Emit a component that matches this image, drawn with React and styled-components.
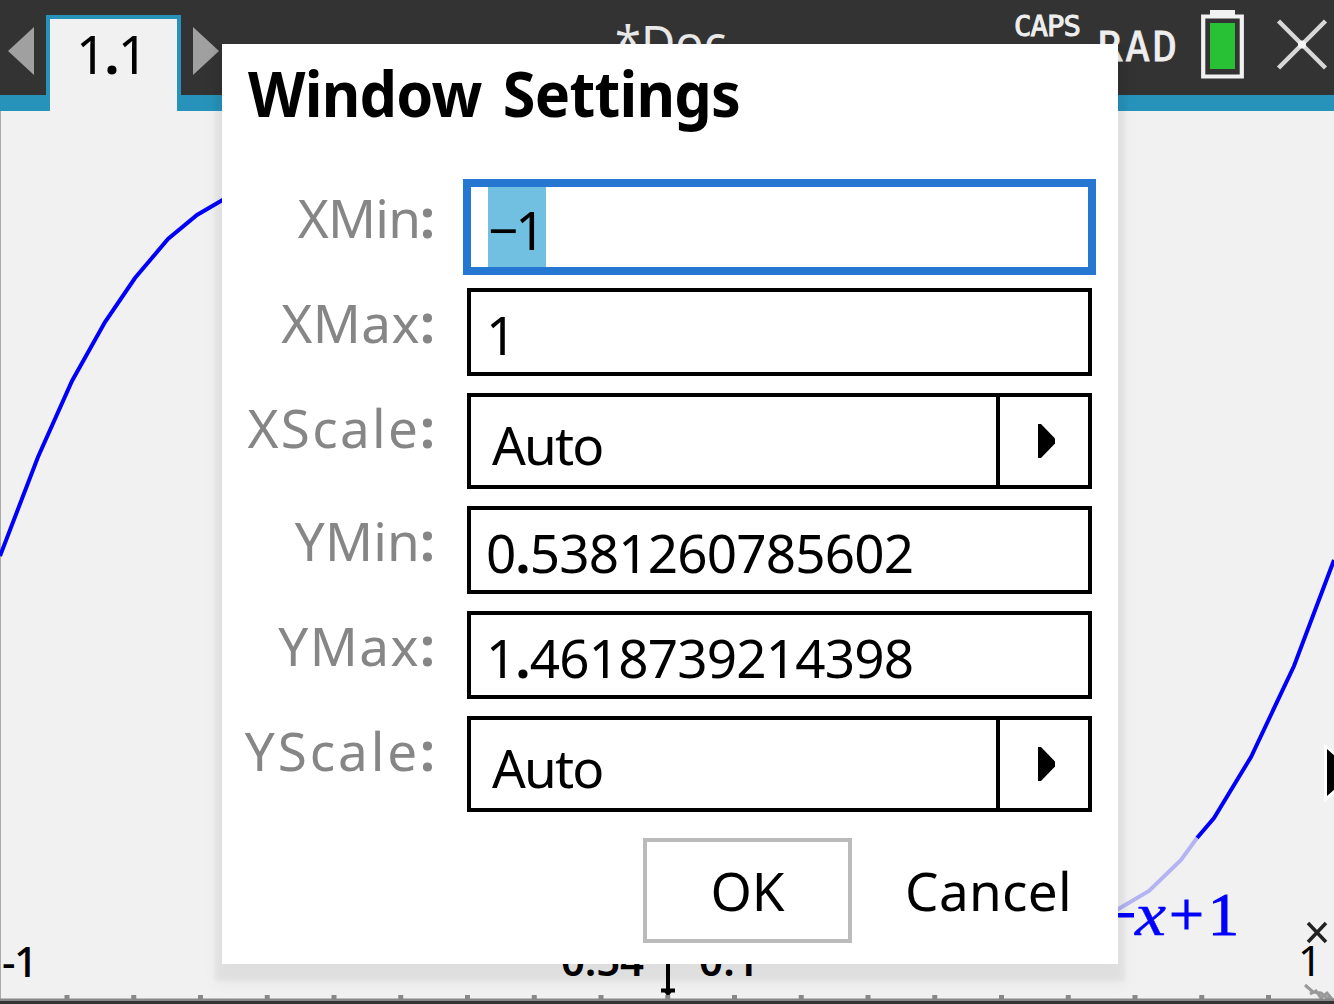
import React from "react";
import styled, { createGlobalStyle, css } from "styled-components";

const Global = createGlobalStyle`
  * { box-sizing: border-box; }
  body {
    margin: 0;
    overflow: hidden;
    font-family: "Noto Sans", "Open Sans", sans-serif;
    color: #000;
  }
`;

const Screen = styled.div`
  position: relative;
  display: flex;
  flex-direction: column;
  width: 1334px;
  height: 1004px;
  overflow: hidden;
  background: #f1f1f1;
`;

const TopBar = styled.header`
  display: flex;
  height: 111px;
  background: #333;
  border-bottom: 16px solid #2793bb;
`;

const TabStrip = styled.nav`
  display: flex;
  align-items: flex-start;
  padding-left: 8px;
`;

const TabArrow = styled.svg`
  width: 26px;
  height: 48px;
  margin-top: 27px;
  fill: #a0a0a0;
`;

const Tab = styled.div`
  width: 135px;
  height: 96px;
  margin: 15px 12px 0;
  padding-top: 5px;
  border: 4px solid #2793bb;
  border-bottom: 0;
  background: #f1f1f1;
  font-size: 53px;
  line-height: 60px;
`;

const TabBody = styled.div`
  height: 72px;
  padding-left: 26px;
  letter-spacing: -1.8px;
`;

const TabFoot = styled.div`
  width: 127px;
  height: 20px;
  background: #f1f1f1;
`;

const DocName = styled.div`
  margin: 12px 0 0 396px;
  height: 60px;
  font-size: 47px;
  line-height: 60px;
  color: #e8e8e8;
`;

const Status = styled.div`
  display: flex;
  align-items: flex-start;
  margin-left: auto;
  padding-right: 6px;
  color: #eee;
  font-family: "DejaVu Sans Mono", monospace;
`;

const Caps = styled.span`
  margin-top: 10px;
  font-size: 29px;
  line-height: 32px;
  letter-spacing: -1px;
  -webkit-text-stroke: 1px #eee;
`;

const Angle = styled.span`
  margin: 22px 0 0 18px;
  font-size: 41px;
  line-height: 50px;
  letter-spacing: 2.7px;
  -webkit-text-stroke: 0.8px #eee;
`;

const StatusIcon = styled.svg`
  display: block;
  flex: none;
  margin: ${(p) => p.$margin};
`;

const Graph = styled.svg`
  display: block;
  flex: none;
  width: 1334px;
  height: 893px;
`;

const Dialog = styled.section`
  position: absolute;
  left: 222px;
  top: 44px;
  width: 896px;
  height: 920px;
  padding: 11px 26px 0 22px;
  background: #fff;
  box-shadow: 0 10px 4px 7px rgba(0, 0, 0, 0.045), 0 14px 14px 8px rgba(0, 0, 0, 0.03);
`;

const Title = styled.h1`
  margin: 0 0 49px 4px;
  height: 79px;
  font-size: 62.5px;
  line-height: 75px;
  font-weight: 700;
  letter-spacing: -0.8px;
  word-spacing: 7px;
  white-space: nowrap;
  transform: scaleX(0.95);
  transform-origin: left;
`;

const Form = styled.div`
  display: grid;
  grid-template-columns: 192px 625px;
  column-gap: 31px;
  row-gap: 17px;
`;

const Label = styled.label`
  display: flex;
  justify-content: flex-end;
  padding: 5px 1px 0 0;
  font-size: 53px;
  line-height: 60px;
  letter-spacing: ${(p) => p.$spacing}px;
  white-space: nowrap;
  color: #868686;
`;

const Colon = styled.span`
  font-weight: 700;
  letter-spacing: 0;
`;

const Field = styled.div`
  height: 88px;
  padding: 13px 0 0 15px;
  border: 4px solid #000;
  font-size: 53px;
  line-height: 60px;
  letter-spacing: -0.8px;
  white-space: nowrap;
  ${(p) =>
    p.$focused &&
    css`
      position: relative;
      padding: 0 0 0 17px;
      border-color: #2577d1;
      box-shadow: 0 0 0 4px #2577d1;
    `}
`;

const Selection = styled.span`
  display: inline-block;
  width: 58px;
  height: 80px;
  padding-top: 13px;
  background: #72c0e1;
  letter-spacing: -3px;
`;

const Point = styled.span`
  font-weight: 700;
`;

const Select = styled.div`
  display: flex;
  height: 96px;
  border: 4px solid #000;
`;

const SelectValue = styled.div`
  flex: 1;
  padding: 18px 0 0 21px;
  font-size: 53px;
  line-height: 60px;
  letter-spacing: -1.8px;
`;

const SelectButton = styled.div`
  width: 92px;
  padding: 27px 0 0 38px;
  border-left: 4px solid #000;
`;

const Actions = styled.div`
  display: flex;
  gap: 20px;
  padding: 26px 0 0 399px;
`;

const Button = styled.button`
  flex: none;
  width: ${(p) => p.$width}px;
  height: 105px;
  margin: 0;
  padding: 0;
  border: 4px solid ${(p) => (p.$outlined ? "#bbb" : "transparent")};
  background: transparent;
  font: 400 53px/60px "Noto Sans", sans-serif;
  letter-spacing: ${(p) => p.$spacing || 0}px;
  color: #000;
`;

function Arrow() {
  return (
    <svg width="18" height="34" viewBox="0 0 18 34">
      <path d="M0 0H3L17 14.500V19.500L3 34H0Z" />
    </svg>
  );
}

function NumberText({ value }) {
  const [whole, fraction] = value.split(".");
  return fraction ? (
    <>
      {whole}
      <Point>.</Point>
      {fraction}
    </>
  ) : (
    value
  );
}

const fields = [
  { label: "XMin", spacing: -0.8, value: "−1", focused: true },
  { label: "XMax", spacing: 0.5, value: "1" },
  { label: "XScale", spacing: 2.3, value: "Auto", select: true },
  { label: "YMin", spacing: 0.2, value: "0.5381260785602" },
  { label: "YMax", spacing: 1.5, value: "1.4618739214398" },
  { label: "YScale", spacing: 2.9, value: "Auto", select: true },
];

const ticks = Array.from({ length: 19 }, (_, i) => 67 + i * 66.75);

export default function App() {
  return (
    <Screen>
      <Global />
      <TopBar>
        <TabStrip>
          <TabArrow viewBox="0 0 26 48">
            <path d="M0 24 26 0v48Z" />
          </TabArrow>
          <Tab>
            <TabBody>
              1<Point>.</Point>1
            </TabBody>
            <TabFoot />
          </Tab>
          <TabArrow viewBox="0 0 26 48">
            <path d="M26 24 0 0v48Z" />
          </TabArrow>
        </TabStrip>
        <DocName>*Doc</DocName>
        <Status>
          <Caps>CAPS</Caps>
          <Angle>RAD</Angle>
          <StatusIcon $margin="10px 0 0 21px" width="43" height="69" viewBox="0 0 43 69">
            <path d="M9 0h25v6H9Z" fill="#f1f1f1" />
            <path d="M2.200 6.500h38.600v60H2.200Z" fill="none" stroke="#f1f1f1" strokeWidth="4.200" />
            <path d="M9 13h25v46H9Z" fill="#28c034" />
          </StatusIcon>
          <StatusIcon $margin="18px 0 0 32px" width="52" height="52" viewBox="0 0 52 52">
            <path d="M2.500 3 49.500 50M49.500 3 2.500 50" stroke="#d8d8d8" strokeWidth="4.500" />
            <circle cx="26" cy="26.500" r="4" fill="#f5f5f5" />
          </StatusIcon>
        </Status>
      </TopBar>
      <Graph viewBox="0 111 1334 893">
        <path d="M.5 111V1000" stroke="#aaa" />
        <g fill="none" stroke="#0000fa" strokeWidth="4">
          <path d="M0 556 38 457 72 381 105 322 135 278 168 239 197 215 226 198" />
          <path d="M1334 560 1294 666 1251 757 1214 818 1197 838" />
          <path d="M1197 838 1181 860 1149 891 1115 911" stroke="#b4b4f3" />
        </g>
        <g fill="#00f" stroke="#00f" fontFamily="Liberation Serif, serif" fontSize="62">
          <path d="M1110 913h24v4.500h-24Z" stroke="none" />
          <text x="1135" y="935" fontStyle="italic" strokeWidth="0.5" textLength="31" lengthAdjust="spacingAndGlyphs">x</text>
          <text x="1169" y="935" strokeWidth="1">+</text>
          <text x="1208" y="935" strokeWidth="1">1</text>
        </g>
        <g fontSize="42">
          <text x="2" y="977" fontWeight="500" textLength="36">-1</text>
          <text x="1298" y="976">1</text>
          <path d="M1308 923 1326 942M1326 923 1308 942" stroke="#222" strokeWidth="3.500" />
          <text x="561" y="976" fontWeight="600" textLength="83">0.54</text>
          <text x="699" y="976" fontWeight="600" textLength="60">0.1</text>
        </g>
        <path d="M668 950V994M661 990.500H675" fill="none" stroke="#000" strokeWidth="4" />
        <path d="M663 990H673L668 997Z" />
        <path d="M1326 748V798L1334 792V754Z" stroke="#fff" strokeWidth="4" />
        <path d="M1327 749V796L1336 788V757Z" />
        <path d="M1305 985l8 7 8 1 6 5 7 2M1310 994l6-3 5 7 6-5 5 6" fill="none" stroke="#999" strokeWidth="3" />
        {ticks.map((x) => (
          <path key={x} d={`M${x - 2.5} 995h5v4h-5Z`} fill="#888" />
        ))}
        <path d="M0 998.500h1334v2.500H0Z" fill="#888" />
        <path d="M0 1001h1334v3H0Z" fill="#333" />
      </Graph>
      <Dialog>
        <Title>Window Settings</Title>
        <Form>
          {fields.map((f) => (
            <React.Fragment key={f.label}>
              <Label $spacing={f.spacing}>
                {f.label}
                <Colon>:</Colon>
              </Label>
              {f.select ? (
                <Select>
                  <SelectValue>{f.value}</SelectValue>
                  <SelectButton>
                    <Arrow />
                  </SelectButton>
                </Select>
              ) : (
                <Field $focused={f.focused}>
                  {f.focused ? <Selection>{f.value}</Selection> : <NumberText value={f.value} />}
                </Field>
              )}
            </React.Fragment>
          ))}
        </Form>
        <Actions>
          <Button $width={209} $outlined>OK</Button>
          <Button $width={233} $spacing={0.3}>Cancel</Button>
        </Actions>
      </Dialog>
    </Screen>
  );
}
